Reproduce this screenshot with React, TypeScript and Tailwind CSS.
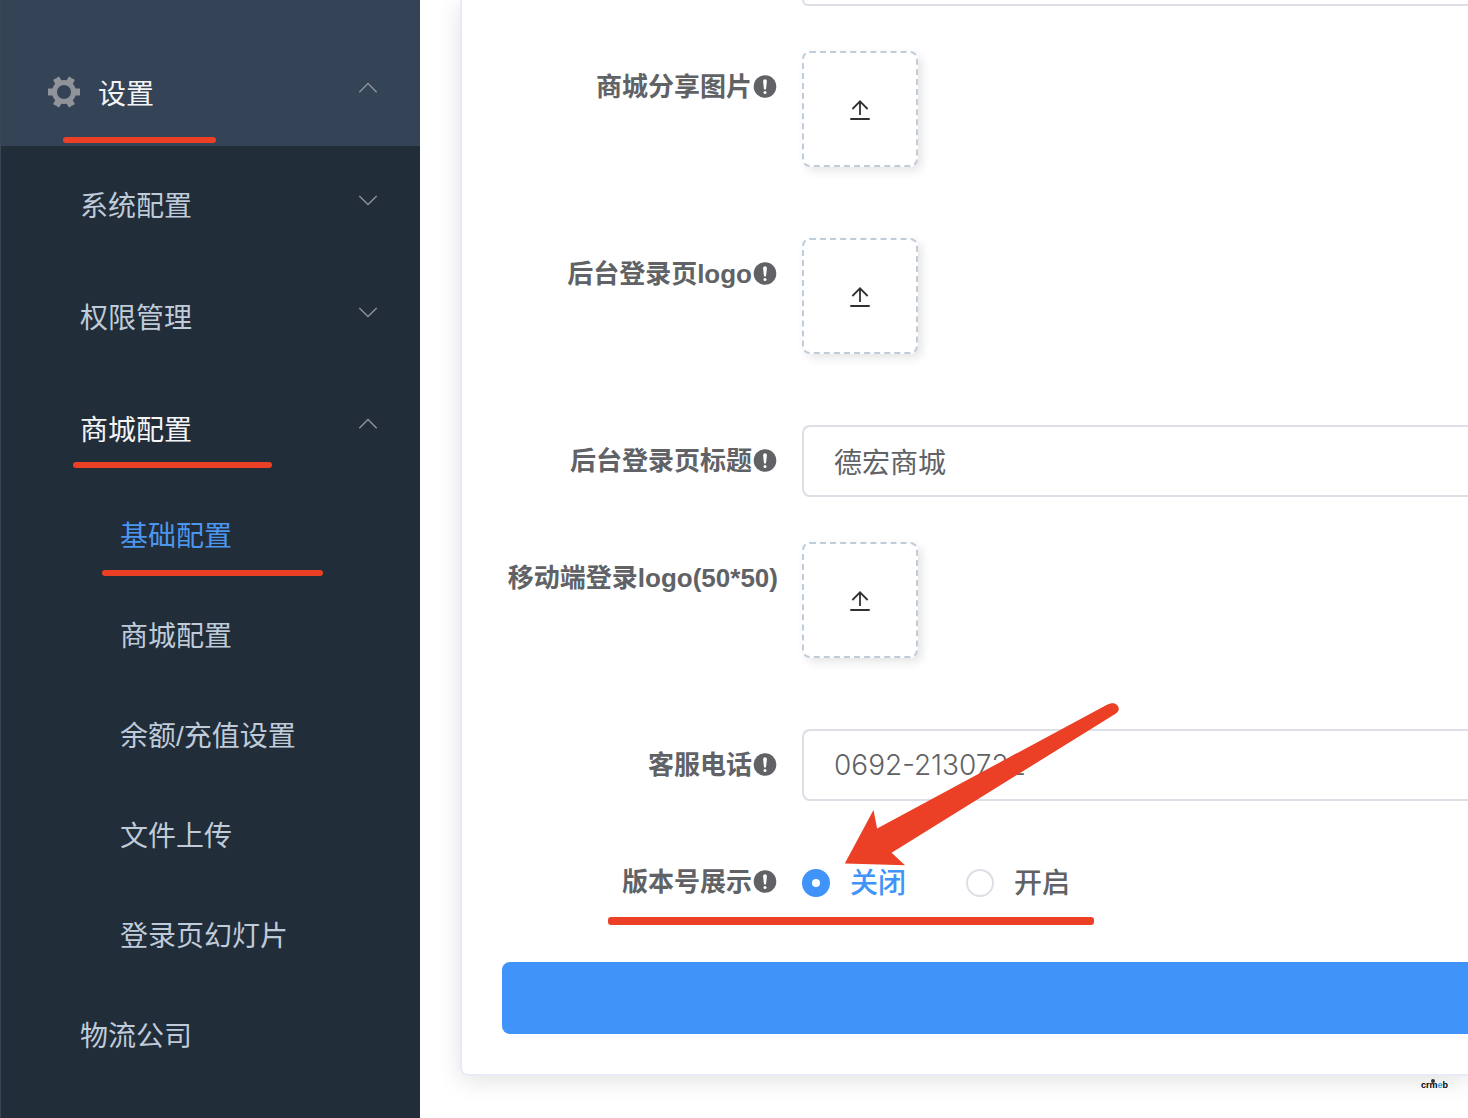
import { useState } from "react";

type MenuItem = { title: string; open?: boolean; active?: boolean; mark?: string };

const groups: MenuItem[] = [
    { title: "系统配置" },
    { title: "权限管理" },
    { title: "商城配置", open: true, mark: "left-[72px] bottom-3.5 w-[199px]" },
];

const shopPages: MenuItem[] = [
    { title: "基础配置", active: true, mark: "left-[101px] bottom-1.5 w-[221px]" },
    { title: "商城配置" },
    { title: "余额/充值设置" },
    { title: "文件上传" },
    { title: "登录页幻灯片" },
];

function Chevron({ open }: { open?: boolean }) {
    return (
        <svg className="w-6 h-6" viewBox="0 0 24 24" fill="none" stroke="#909399" strokeWidth="1.4" aria-hidden="true">
            <path d={open ? "M3.3 14.2 12 5.6l8.7 8.6" : "M3.3 6 12 14.6 20.7 6"} />
        </svg>
    );
}

function Gear() {
    return (
        <svg className="w-8 h-8 mt-1" viewBox="-16 -16 32 32" aria-hidden="true">
            <circle r="9.5" fill="none" stroke="#909399" strokeWidth="5" />
            {[0, 60, 120, 180, 240, 300].map((deg) => (
                <rect key={deg} x="9" y="-3.5" width="7" height="7" rx="0.5" fill="#909399" transform={`rotate(${deg})`} />
            ))}
        </svg>
    );
}

function Tip() {
    return (
        <svg className="w-[26px] h-[26px]" viewBox="0 0 26 26" aria-hidden="true">
            <circle cx="13" cy="12.5" r="11.3" fill="#606266" />
            <path d="M11.1 7.2a1.9 1.9 0 0 1 3.8 0l-.8 7.4a1.1 1.1 0 0 1-2.2 0z" fill="#fff" />
            <circle cx="13" cy="18.4" r="1.5" fill="#fff" />
        </svg>
    );
}

function Mark({ className }: { className: string }) {
    return <span className={`absolute rounded-[3px] bg-[#eb4026] ${className}`} />;
}

function Row({ label, id, tip = true, children }: { label: string; id: string; tip?: boolean; children: React.ReactNode }) {
    return (
        <div className="flex items-start">
            <label htmlFor={id} className="w-[300px] h-[72px] shrink-0 pr-6 flex items-center justify-end text-[26px] font-bold whitespace-nowrap">
                {label}
                {tip && <Tip />}
            </label>
            <div className="flex-1">{children}</div>
        </div>
    );
}

function Upload({ id }: { id: string }) {
    return (
        <div className="h-[142px]">
            <button id={id} type="button" className="w-[116px] h-[116px] flex items-center justify-center bg-white border-2 border-dashed border-[#c0ccda] rounded-lg shadow-[4px_4px_10px_rgba(0,0,0,0.1)] cursor-pointer">
                <svg className="w-6 h-6" viewBox="0 0 24 24" fill="none" stroke="#303133" strokeWidth="1.8" aria-hidden="true">
                    <path d="M12 18V5M4.4 12 12 4.3l7.6 7.700M2.300 22h19.400" />
                </svg>
            </button>
        </div>
    );
}

const inputStyle = "block w-full h-[72px] px-[30px] bg-white border-2 border-r-0 border-[#dcdfe6] rounded-l-lg text-[28px] outline-none";

export default function App() {
    const [title, setTitle] = useState("德宏商城");
    const [phone, setPhone] = useState("0692-2130722");
    const [version, setVersion] = useState("off");

    const options = [
        { value: "off", text: "关闭" },
        { value: "on", text: "开启" },
    ];

    return (
        <div className="relative flex min-h-screen overflow-hidden bg-white text-[#606266] font-['Liberation_Sans','Noto_Sans_CJK_SC',sans-serif]">
            <nav className="w-[420px] shrink-0 bg-[#222d3a] border-l border-[#3a4656] text-[28px] text-[#bfcbd9]">
                <div className="pt-[34px] bg-[#344356]">
                    <button type="button" className="relative w-full h-28 pl-[47px] pr-10 flex items-center text-[#f4f4f5] cursor-pointer">
                        <Gear />
                        <span className="pt-2.5 pl-[18px] flex-1 text-left">设置</span>
                        <Chevron open />
                        <Mark className="left-[62px] bottom-[3px] w-[153px] h-1.5" />
                    </button>
                </div>
                {groups.map((item) => (
                    <button key={item.title} type="button" className={`relative w-full h-28 pl-[79px] pr-10 flex items-center justify-between cursor-pointer ${item.open ? "text-[#f4f4f5]" : ""}`}>
                        <span className="pt-2.5">{item.title}</span>
                        <Chevron open={item.open} />
                        {item.mark && <Mark className={`h-1.5 ${item.mark}`} />}
                    </button>
                ))}
                {shopPages.map((item) => (
                    <a key={item.title} href="#" className={`relative h-[100px] pl-[119px] pt-2.5 flex items-center ${item.active ? "text-[#4c96f0]" : ""}`}>
                        {item.title}
                        {item.mark && <Mark className={`h-1.5 ${item.mark}`} />}
                    </a>
                ))}
                <a href="#" className="h-[100px] pl-[79px] pt-2.5 flex items-center">物流公司</a>
            </nav>

            <main className="flex-1 pl-10 pb-10">
                <form className="pl-10 pb-10 border-l-2 border-b-2 border-[#e6ebf5] rounded-bl-lg shadow-[0_4px_24px_rgba(0,0,0,0.12)]" onSubmit={(e) => e.preventDefault()}>
                    <div className="flex flex-col gap-[45px]">
                        <input aria-label="商城名称" className="ml-[300px] h-1.5 bg-white border-b-2 border-l-2 border-[#dcdfe6] rounded-bl-lg" />
                        <Row label="商城分享图片" id="share">
                            <Upload id="share" />
                        </Row>
                        <Row label="后台登录页logo" id="adminLogo">
                            <Upload id="adminLogo" />
                        </Row>
                        <Row label="后台登录页标题" id="title">
                            <input id="title" className={inputStyle} value={title} onChange={(e) => setTitle(e.target.value)} />
                        </Row>
                        <Row label="移动端登录logo(50*50)" id="mobileLogo" tip={false}>
                            <Upload id="mobileLogo" />
                        </Row>
                        <Row label="客服电话" id="phone">
                            <input id="phone" className={`${inputStyle} font-light font-['Inter','Noto_Sans_CJK_SC',sans-serif]`} value={phone} onChange={(e) => setPhone(e.target.value)} />
                        </Row>
                        <Row label="版本号展示" id="off">
                            <div className="relative h-[72px] pt-0.5 flex items-center gap-[60px] text-[28px] font-medium">
                                {options.map((opt) => (
                                    <label key={opt.value} htmlFor={opt.value} className={`flex items-center gap-5 cursor-pointer ${version === opt.value ? "text-[#4093f8]" : ""}`}>
                                        <input
                                            id={opt.value}
                                            type="radio"
                                            name="version"
                                            className="appearance-none w-7 h-7 rounded-full bg-white border-2 border-[#dcdfe6] checked:border-[10px] checked:border-[#4093f8]"
                                            checked={version === opt.value}
                                            onChange={() => setVersion(opt.value)}
                                        />
                                        <span className="pt-0.5">{opt.text}</span>
                                    </label>
                                ))}
                                <Mark className="-left-[194px] -bottom-[7px] w-[486px] h-2" />
                                <svg className="absolute left-[42px] -top-36 w-[276px] h-[164px] pointer-events-none" viewBox="0 0 276 164" fill="#eb4026" aria-hidden="true">
                                    <path d="M.8 161.600 29.500 108l3.600 18.400L262.500 3c5-2.400 8.500-2 10.500 0 2.500 2.500 2.500 6-1 8.500L47.600 150.700 61 163.200z" />
                                </svg>
                            </div>
                        </Row>
                    </div>
                    <button type="submit" aria-label="提交" className="block w-full h-[72px] mt-11 rounded-l-lg bg-[#4093f8] cursor-pointer" />
                </form>
            </main>

            <div className="absolute right-5 bottom-[27px] text-[9px] leading-3 font-bold text-black font-['Liberation_Sans',sans-serif]">
                <span className="absolute left-2.5 top-0 w-1 h-1 rounded-full bg-[#333]" />
                crm<span className="text-[#1fa0e6]">e</span>b
            </div>
        </div>
    );
}
